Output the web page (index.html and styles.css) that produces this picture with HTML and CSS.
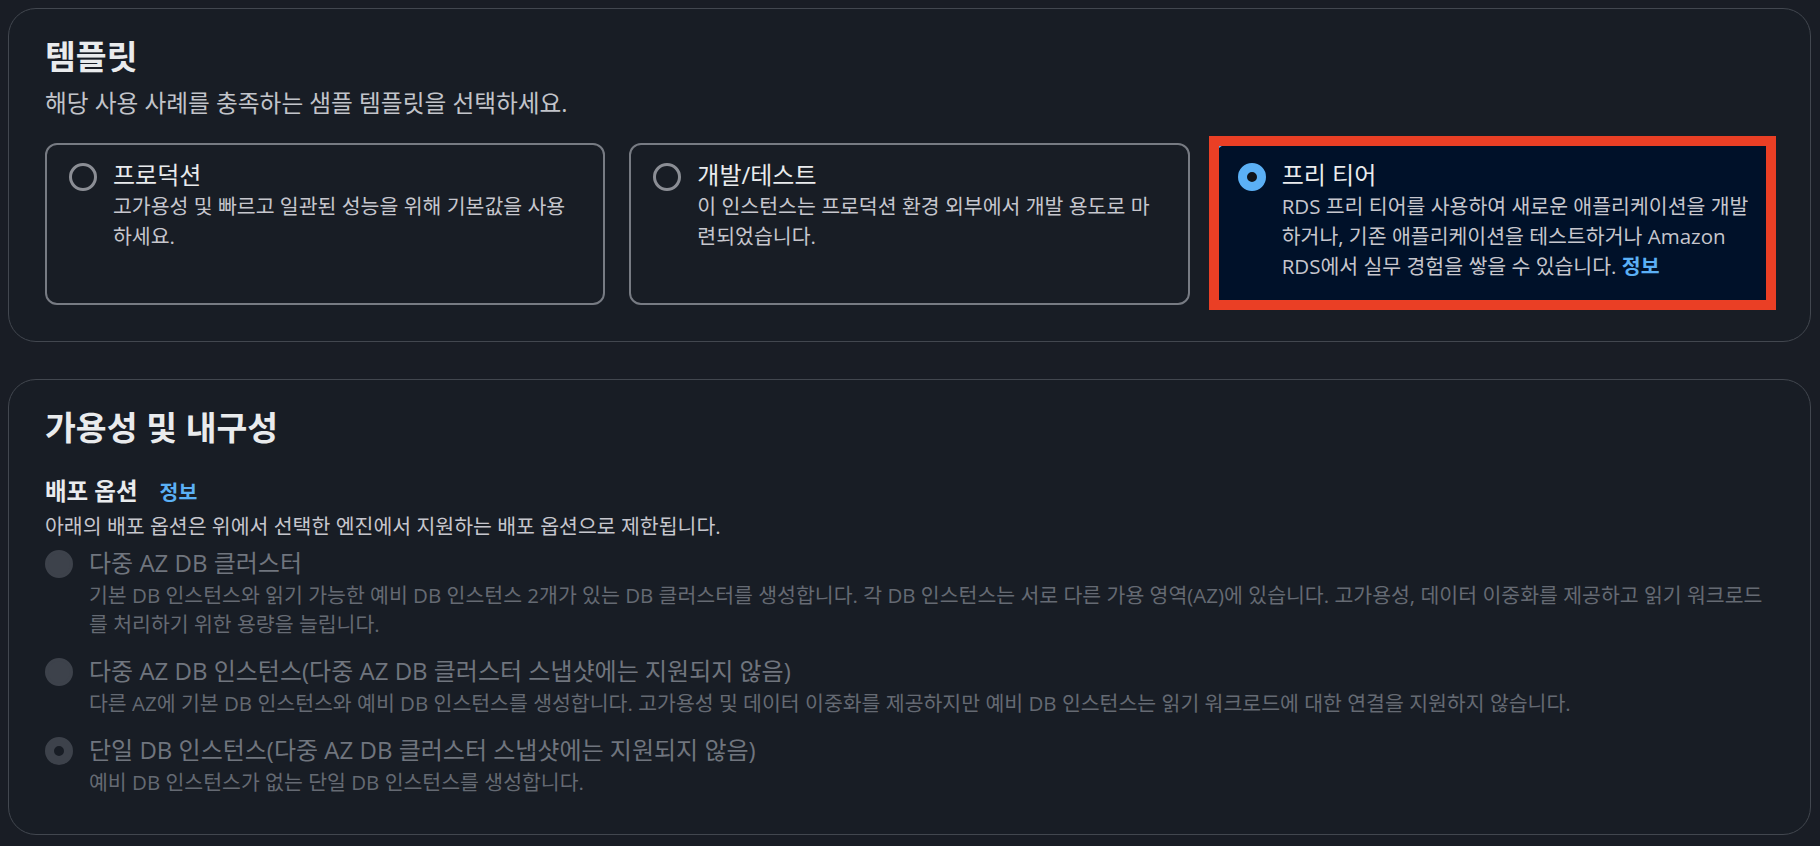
FILE: index.html
```html
<!DOCTYPE html>
<html lang="ko">
<head>
    <meta charset="utf-8">
    <title>데이터베이스 생성</title>
    <link rel="stylesheet" href="styles.css">
</head>
<body>
    <section class="panel panel-templates">
        <h2 class="panel-title">템플릿</h2>
        <p class="panel-desc">해당 사용 사례를 충족하는 샘플 템플릿을 선택하세요.</p>

        <div class="tiles">
            <div class="tile">
                <span class="radio"></span>
                <div class="tile-body">
                    <div class="tile-label">프로덕션</div>
                    <div class="tile-desc">고가용성 및 빠르고 일관된 성능을 위해 기본값을 사용하세요.</div>
                </div>
            </div>

            <div class="tile">
                <span class="radio"></span>
                <div class="tile-body">
                    <div class="tile-label">개발/테스트</div>
                    <div class="tile-desc">이 인스턴스는 프로덕션 환경 외부에서 개발 용도로 마련되었습니다.</div>
                </div>
            </div>

            <div class="tile tile-selected">
                <span class="radio radio-checked"></span>
                <div class="tile-body">
                    <div class="tile-label">프리 티어</div>
                    <div class="tile-desc">RDS 프리 티어를 사용하여 새로운 애플리케이션을 개발하거나, 기존 애플리케이션을 테스트하거나 Amazon RDS에서 실무 경험을 쌓을 수 있습니다. <a class="info-link" href="#">정보</a></div>
                </div>
                <span class="highlight"></span>
            </div>
        </div>
    </section>

    <section class="panel panel-availability">
        <h2 class="panel-title">가용성 및 내구성</h2>
        <div class="field-label">배포 옵션<a class="info-link field-info" href="#">정보</a></div>
        <p class="field-desc">아래의 배포 옵션은 위에서 선택한 엔진에서 지원하는 배포 옵션으로 제한됩니다.</p>

        <div class="radio-group">
            <div class="option">
                <span class="radio radio-disabled"></span>
                <div>
                    <div class="option-label">다중 AZ DB 클러스터</div>
                    <div class="option-desc">기본 DB 인스턴스와 읽기 가능한 예비 DB 인스턴스 2개가 있는 DB 클러스터를 생성합니다. 각 DB 인스턴스는 서로 다른 가용 영역(AZ)에 있습니다. 고가용성, 데이터 이중화를 제공하고 읽기 워크로드를 처리하기 위한 용량을 늘립니다.</div>
                </div>
            </div>

            <div class="option">
                <span class="radio radio-disabled"></span>
                <div>
                    <div class="option-label">다중 AZ DB 인스턴스(다중 AZ DB 클러스터 스냅샷에는 지원되지 않음)</div>
                    <div class="option-desc">다른 AZ에 기본 DB 인스턴스와 예비 DB 인스턴스를 생성합니다. 고가용성 및 데이터 이중화를 제공하지만 예비 DB 인스턴스는 읽기 워크로드에 대한 연결을 지원하지 않습니다.</div>
                </div>
            </div>

            <div class="option">
                <span class="radio radio-disabled-checked"></span>
                <div>
                    <div class="option-label">단일 DB 인스턴스(다중 AZ DB 클러스터 스냅샷에는 지원되지 않음)</div>
                    <div class="option-desc">예비 DB 인스턴스가 없는 단일 DB 인스턴스를 생성합니다.</div>
                </div>
            </div>
        </div>
    </section>
</body>
</html>
```

FILE: styles.css
```css
* {
    box-sizing: border-box;
}

body {
    margin: 0;
    padding: 8px 9px 8px 8px;
    background: #191d25;
    font-family: "Open Sans", "Noto Sans CJK KR", sans-serif;
    color: #c6c6cd;
}

.panel {
    background: #181d25;
    border: 1px solid #42474f;
    border-radius: 28px;
    padding: 27px 36px 36px;
}

.panel + .panel {
    margin-top: 37px;
}

.panel-availability {
    padding-bottom: 37px;
}

.panel-title {
    margin: 0;
    font-size: 33.5px;
    font-weight: 700;
    line-height: 40px;
    color: #e9ebed;
}

.panel-desc {
    margin: 12px 0 0;
    font-size: 23.7px;
    line-height: 30px;
    color: #c2c4ca;
}

/* template tiles */
.tiles {
    display: grid;
    grid-template-columns: repeat(3, 1fr);
    gap: 24px;
    margin-top: 25px;
}

.tile {
    position: relative;
    display: flex;
    align-items: flex-start;
    gap: 16px;
    padding: 14px 21.5px 22px 22px;
    border: 2px solid #777b83;
    border-radius: 12px;
}

.tile-selected {
    background: #001129;
    border-color: #5bb0f5;
}

.tile-body {
    flex: 1;
}

.tile-label {
    font-size: 24px;
    line-height: 32px;
    color: #e9ebed;
}

.tile-desc {
    font-size: 20.5px;
    line-height: 30px;
    color: #c6c6cd;
}

/* red annotation frame around the chosen tile */
.highlight {
    position: absolute;
    top: -9px;
    left: -7px;
    right: -4px;
    bottom: -7px;
    border: 10px solid #ea3f25;
    pointer-events: none;
}

.radio {
    flex: none;
    width: 28px;
    height: 28px;
    margin-top: 4px;
    border-radius: 50%;
    border: 3px solid #8b8e95;
}

.radio-checked {
    border: 9px solid #5bb0f5;
    background: #0f141a;
}

.radio-disabled {
    border-color: #3d424b;
    background: #3d424b;
}

.radio-disabled-checked {
    border: 9px solid #3d424b;
    background: #181d25;
}

.info-link {
    color: #5bb0f5;
    font-weight: 700;
    text-decoration: none;
}

/* deployment options */
.field-label {
    margin-top: 28px;
    font-size: 23.5px;
    font-weight: 700;
    line-height: 32px;
    color: #e9ebed;
}

.field-info {
    margin-left: 22px;
    font-size: 20.5px;
}

.field-desc {
    margin: 4px 0 0;
    font-size: 20.5px;
    line-height: 28px;
    color: #c6c6cd;
}

.radio-group {
    display: flex;
    flex-direction: column;
    gap: 16px;
    margin-top: 7px;
}

.option {
    display: flex;
    align-items: flex-start;
    gap: 16px;
}

.option .radio {
    margin-top: 3px;
}

.option-label {
    font-size: 24px;
    line-height: 32px;
    color: #70757e;
}

.option-desc {
    margin-top: 2px;
    font-size: 20.5px;
    line-height: 29px;
    color: #656a73;
}
```
